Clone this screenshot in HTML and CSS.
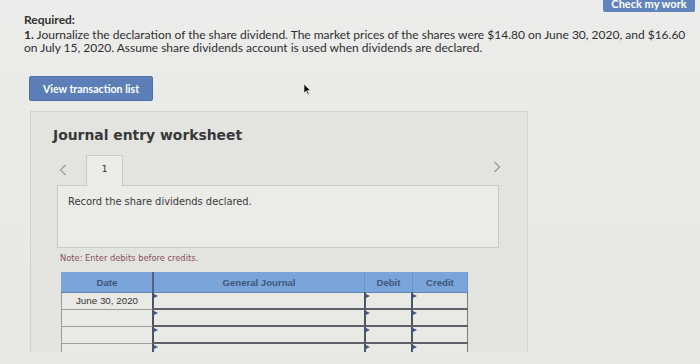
FILE: index.html
```html
<!DOCTYPE html>
<html lang="en">
<head>
    <meta charset="UTF-8">
    <title>Journal entry worksheet</title>
    <link rel="stylesheet" href="styles.css">
</head>
<body>
    <div class="topbar">
        <button class="check-btn">Check my work</button>
    </div>
    <div class="question">
        <div class="required">Required:</div>
        <p><b>1.</b> Journalize the declaration of the share dividend. The market prices of the shares were $14.80 on June 30, 2020, and $16.60 on July 15, 2020. Assume share dividends account is used when dividends are declared.</p>
    </div>
    <div class="actions">
        <button class="view-btn">View transaction list</button>
        <svg class="cursor" width="8" height="12" viewBox="0 0 8 12"><path d="M1 1 L1 10 L3.2 8 L4.8 11.5 L6 11 L4.5 7.6 L7.3 7.4 Z" fill="#111" stroke="#eee" stroke-width="0.6"/></svg>
    </div>
    <div class="panel">
        <h3>Journal entry worksheet</h3>
        <div class="tabs">
            <svg class="arrow" width="8" height="12" viewBox="0 0 8 12"><path d="M6.5 1 L1.5 6 L6.5 11" fill="none" stroke="#9a9a98" stroke-width="1.2"/></svg>
            <div class="tab">1</div>
            <svg class="arrow next" width="8" height="12" viewBox="0 0 8 12"><path d="M1.5 1 L6.5 6 L1.5 11" fill="none" stroke="#9a9a98" stroke-width="1.2"/></svg>
        </div>
        <div class="entry-box">Record the share dividends declared.</div>
        <div class="note">Note: Enter debits before credits.</div>
        <table class="journal">
            <thead>
                <tr>
                    <th class="c-date">Date</th>
                    <th class="c-gj">General Journal</th>
                    <th class="c-num">Debit</th>
                    <th class="c-num">Credit</th>
                </tr>
            </thead>
            <tbody>
                <tr><td class="date">June 30, 2020</td><td class="inp"></td><td class="inp"></td><td class="inp"></td></tr>
                <tr><td class="date"></td><td class="inp"></td><td class="inp"></td><td class="inp"></td></tr>
                <tr><td class="date"></td><td class="inp"></td><td class="inp"></td><td class="inp"></td></tr>
                <tr><td class="date"></td><td class="inp"></td><td class="inp"></td><td class="inp"></td></tr>
            </tbody>
        </table>
    </div>
</body>
</html>
```

FILE: styles.css
```css
body {
    margin: 0;
    height: 364px;
    overflow: hidden;
    font-family: Lato, "Open Sans", Arial, sans-serif;
    background: linear-gradient(180deg, #ececea 0%, #e7e7e4 100%);
    color: #2e2e30;
}
.topbar {
    display: flex;
    justify-content: flex-end;
    padding-right: 5px;
    height: 12px;
}
.check-btn {
    margin-top: -8px;
    height: 20px;
    width: 92px;
    background: #5f83ba;
    color: #fff;
    border: none;
    border-radius: 2px;
    font-family: Lato, Arial, sans-serif;
    font-weight: 700;
    font-size: 11px;
    line-height: 24px;
    padding: 0;
    overflow: hidden;
}
.question {
    padding: 1px 0 0 24px;
    font-size: 12px;
    line-height: 13px;
}
.required {
    font-weight: 700;
    color: #333;
    line-height: 14px;
    margin-bottom: 1px;
}
.question p {
    margin: 0;
    width: 670px;
}
.actions {
    display: flex;
    align-items: center;
    margin: 22px 0 0 29px;
    position: relative;
}
.view-btn {
    width: 124px;
    height: 25px;
    background: #5b7fb6;
    border: 1px solid #4e70a3;
    border-radius: 2px;
    color: #fff;
    font-family: Lato, Arial, sans-serif;
    font-weight: 700;
    font-size: 10.6px;
    padding: 0;
}
.cursor {
    position: absolute;
    left: 274px;
    top: 7px;
}
.panel {
    margin: 10px 0 0 30px;
    width: 498px;
    height: 241px;
    box-sizing: border-box;
    overflow: hidden;
    background: #e3e3e0;
    border: 1px solid #d3d3d0;
    border-bottom: none;
    padding: 15px 0 0 22px;
}
.panel h3 {
    margin: 0 0 9px 0;
    font-family: "DejaVu Sans", Verdana, sans-serif;
    font-size: 13.9px;
    font-weight: 700;
    color: #38383a;
    height: 18px;
}
.tabs {
    display: flex;
    align-items: flex-end;
    width: 442px;
    margin-left: 4px;
    height: 31px;
}
.arrow {
    align-self: center;
    margin: 0 19px 0 2px;
}
.arrow.next {
    margin: 0 0 0 auto;
    position: relative;
    left: 2px;
    top: -3px;
}
.tab {
    width: 37px;
    height: 31px;
    box-sizing: border-box;
    border: 1px solid #c9c9c6;
    border-bottom: none;
    background: #ebebe8;
    text-align: center;
    font-family: "DejaVu Sans", Verdana, sans-serif;
    font-size: 9px;
    line-height: 26px;
    color: #333;
    position: relative;
    top: 1px;
}
.entry-box {
    width: 442px;
    height: 63px;
    margin-left: 4px;
    box-sizing: border-box;
    background: #ebebe8;
    border: 1px solid #c9c9c6;
    padding: 10px 0 0 10px;
    font-family: "DejaVu Sans", Verdana, sans-serif;
    font-size: 9.9px;
    color: #3a3a3a;
}
.note {
    margin: 5px 0 0 7px;
    font-family: "DejaVu Sans", Verdana, sans-serif;
    font-size: 8.3px;
    color: #8c4e62;
}
.journal {
    margin: 9px 0 0 8px;
    width: 407px;
    border-collapse: collapse;
    font-family: "Liberation Sans", Arial, sans-serif;
}
.journal th {
    background: #79a5da;
    color: #3f5778;
    font-size: 9.6px;
    font-weight: 700;
    height: 20px;
    padding: 0;
    border-left: 1px solid #6d93c4;
    border-bottom: 1px solid #6285b5;
}
.journal th.c-date {
    width: 90px;
    border-left: 1px solid #79a5da;
}
.journal th.c-gj {
    width: 210px;
    border-left: 2px solid #4f6384;
}
.journal th:last-child {
    border-right: 1px solid #6d93c4;
}
.journal td {
    height: 15px;
    padding: 0;
    background: #e9e9e6;
}
.journal td.date {
    font-size: 9.8px;
    color: #333;
    text-align: center;
    border-left: 1px solid #9b9b9b;
    border-bottom: 1px solid #9c9c9c;
}
.journal td.inp {
    position: relative;
    border-left: 2px solid #4c5466;
    border-bottom: 2px solid #5d6068;
}
.journal td.inp:last-child {
    border-right: 1px solid #7a7a7a;
}
.journal td.inp::before {
    content: "";
    position: absolute;
    left: 0;
    top: 1px;
    border-left: 4px solid #3e5a86;
    border-top: 2px solid transparent;
    border-bottom: 2px solid transparent;
}
```
